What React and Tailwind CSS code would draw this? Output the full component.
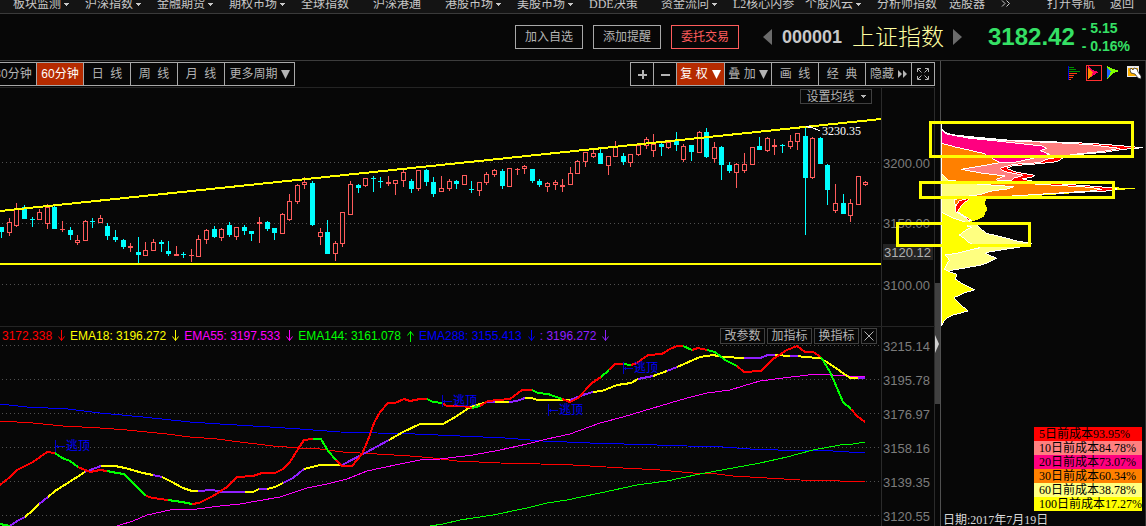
import React from 'react';

const RED = '#ff5c5c';
const CYAN = '#00ffff';

const NAV = [
    { label: '板块监测', menu: true },
    { label: '沪深指数', menu: true },
    { label: '金融期货', menu: true },
    { label: '期权市场', menu: true },
    { label: '全球指数' },
    { label: '沪深港通' },
    { label: '港股市场', menu: true },
    { label: '美股市场', menu: true },
    { label: 'DDE决策' },
    { label: '资金流向', menu: true },
    { label: 'L2核心内参' },
    { label: '个股风云', menu: true },
    { label: '分析师指数' },
    { label: '选股器' },
];

// x, high, body top, body bottom, low, rising
const CANDLES = [
    [1, 227, 227, 232, 238, 0], [9, 218, 222, 233, 236, 1], [16, 203, 208, 226, 227, 1], [24, 205, 207, 219, 219, 0],
    [32, 217, 219, 220, 227, 0], [39, 209, 212, 220, 220, 1], [47, 204, 207, 224, 229, 1], [54, 206, 207, 229, 229, 0],
    [62, 221, 229, 230, 232, 1], [70, 227, 230, 235, 240, 0], [77, 235, 240, 243, 245, 1], [85, 220, 221, 241, 241, 1],
    [92, 218, 221, 222, 228, 0], [100, 215, 218, 223, 223, 1], [107, 223, 226, 236, 240, 0], [115, 230, 237, 240, 242, 0],
    [123, 239, 240, 247, 249, 0], [130, 243, 246, 248, 252, 1], [138, 237, 252, 255, 263, 0], [145, 242, 250, 256, 256, 1],
    [153, 239, 242, 251, 251, 1], [161, 240, 242, 244, 252, 0], [168, 241, 251, 254, 256, 0], [176, 246, 254, 256, 256, 1],
    [183, 252, 254, 255, 258, 0], [191, 249, 255, 256, 262, 1], [198, 235, 239, 257, 257, 1], [206, 229, 230, 240, 244, 1],
    [214, 226, 229, 237, 238, 0], [221, 228, 229, 238, 241, 1], [229, 222, 225, 235, 237, 0], [236, 227, 227, 237, 240, 1],
    [244, 225, 227, 231, 235, 0], [251, 231, 231, 234, 241, 0], [259, 217, 222, 224, 243, 1], [267, 221, 222, 229, 231, 0],
    [274, 228, 228, 233, 240, 0], [282, 213, 214, 234, 234, 1], [289, 194, 201, 220, 221, 1], [297, 184, 185, 202, 204, 1],
    [304, 177, 182, 185, 189, 1], [312, 181, 183, 225, 226, 0], [320, 228, 232, 237, 245, 1], [327, 220, 232, 254, 254, 0],
    [335, 241, 243, 254, 261, 1], [342, 212, 212, 244, 247, 1], [350, 181, 184, 215, 215, 1], [358, 184, 185, 188, 193, 0],
    [365, 178, 178, 186, 187, 1], [373, 176, 178, 179, 192, 0], [380, 177, 181, 182, 188, 0], [388, 176, 182, 184, 186, 1],
    [395, 180, 180, 184, 195, 1], [403, 169, 172, 181, 187, 1], [411, 179, 181, 189, 193, 0], [418, 170, 170, 189, 191, 1],
    [426, 169, 170, 182, 186, 0], [433, 177, 182, 194, 197, 0], [441, 176, 188, 192, 192, 1], [449, 179, 181, 189, 191, 1],
    [456, 180, 181, 184, 189, 0], [464, 175, 175, 185, 185, 1], [471, 181, 189, 190, 193, 0], [479, 182, 182, 191, 196, 1],
    [486, 172, 174, 183, 185, 1], [494, 169, 170, 175, 177, 1], [502, 169, 171, 186, 189, 0], [509, 168, 168, 187, 187, 1],
    [517, 168, 169, 170, 175, 1], [524, 165, 166, 169, 174, 1], [532, 169, 169, 181, 183, 0], [539, 179, 181, 185, 187, 0],
    [547, 182, 183, 187, 192, 1], [555, 180, 182, 185, 190, 1], [562, 179, 185, 187, 192, 1], [570, 167, 173, 185, 185, 1],
    [577, 160, 161, 174, 174, 1], [585, 152, 152, 162, 167, 1], [593, 149, 153, 157, 158, 1], [600, 148, 153, 164, 164, 0],
    [608, 156, 156, 166, 175, 1], [615, 141, 147, 157, 157, 1], [623, 153, 156, 162, 165, 0], [630, 154, 154, 163, 167, 1],
    [638, 145, 145, 155, 156, 1], [646, 137, 139, 146, 149, 1], [653, 134, 144, 151, 157, 1], [661, 142, 144, 147, 156, 0],
    [668, 141, 142, 148, 149, 1], [676, 132, 141, 145, 151, 0], [683, 144, 146, 160, 162, 1], [691, 145, 145, 152, 161, 0],
    [699, 131, 132, 153, 153, 1], [706, 128, 132, 157, 158, 0], [714, 142, 147, 159, 163, 1], [721, 146, 147, 165, 180, 0],
    [729, 162, 165, 171, 173, 0], [736, 163, 164, 173, 188, 1], [744, 153, 164, 171, 173, 1], [752, 147, 147, 165, 165, 1],
    [759, 137, 146, 150, 150, 0], [767, 137, 138, 151, 152, 1], [774, 139, 145, 147, 155, 1], [782, 144, 145, 146, 153, 0],
    [790, 135, 141, 147, 149, 1], [797, 133, 133, 142, 150, 1], [805, 126, 136, 178, 235, 0], [812, 137, 138, 178, 179, 1],
    [820, 137, 138, 164, 164, 0], [827, 164, 165, 190, 205, 0], [835, 184, 203, 211, 213, 1], [843, 194, 203, 214, 214, 0],
    [850, 199, 203, 216, 222, 1], [858, 176, 176, 205, 205, 1], [865, 181, 182, 185, 186, 1],
];

const SLOW_LINES = [
    ['#0000ff', '0,404 27,407 68,409 100,413 143,417 190,422 220,424 270,427 300,429 340,432 377,433 415,434 460,436 505,438 543,441 590,443 657,445 687,446 723,447 750,449 778,450 817,450 865,453'],
    ['#ff0000', '0,421 33,423 63,426 100,428 127,430 167,434 190,437 217,439 240,442 273,446 300,448 320,449 343,452 377,454 410,456 433,458 457,461 500,463 540,464 573,465 623,468 660,470 693,473 717,474 733,476 767,478 800,480 840,481 865,481'],
    ['#ff00ff', '117,526 133,521 147,515 170,510 197,509 220,506 240,504 280,497 307,488 327,484 347,479 367,471 400,464 420,460 440,459 473,455 500,450 527,444 547,439 570,434 600,423 623,417 643,411 687,398 707,393 730,390 743,386 760,381 783,378 817,374 833,375 865,377'],
    ['#00ff00', '430,526 443,524 460,520 493,515 527,508 547,503 567,500 600,493 637,485 667,481 700,474 733,468 760,463 787,457 813,450 840,445 853,444 865,442'],
];

// segments of the two averages that switch colour with direction
const TREND_SEGMENTS = {
    '#ffff00': [
        '25,517 33,510 39,504', '48,497 55,491 85,472', '101,466 115,466 125,468 143,473 153,475',
        '162,477 170,481 183,488 192,491 198,491', '245,492 253,492 259,489', '267,489 275,487 283,483',
        '304,469 320,465 342,465', '389,440 403,432 420,424 443,424 457,416 470,407 487,402', '495,402 509,402',
        '525,398 532,398 537,400 570,400', '593,392 602,391 617,385 631,383 638,379', '653,376 667,371',
        '677,367 700,357 713,355 723,357 744,358', '775,355 790,356', '798,356 804,357 820,358 830,364 850,378 858,378',
    ],
    '#9020ff': [
        '10,526 17,521 25,517', '39,504 48,497', '85,472 93,469 101,466', '153,475 162,477',
        '198,491 213,490 222,492 245,492', '259,489 267,489', '283,483 293,478 304,469', '342,465 367,452 389,440',
        '487,402 495,402', '509,402 517,401 525,398', '570,400 583,395 593,392', '638,379 653,376', '667,371 677,367',
        '744,358 760,358 768,355 775,355', '790,356 798,356', '858,378 865,378',
    ],
    '#ff0000': [
        '0,485 10,477 17,470 33,462 47,452 55,453', '78,467 90,472 100,470 107,471', '146,496 153,498 168,500',
        '192,504 199,503 213,496 227,487 237,477 253,476 262,473 275,473 283,469 290,462 300,446 304,440 313,439',
        '336,460 342,466 352,466 362,454 368,440 374,423 380,412 388,403 395,403 404,399 410,401 420,399 427,399',
        '442,403 447,406 463,406 472,408', '480,406 488,401 510,399 522,390 532,390', '562,399 570,402 578,398 592,383 601,377',
        '609,370 615,364 623,364', '631,365 637,363 648,355 662,354 670,349 677,346 683,346', '692,350 698,348 707,350',
        '737,366 744,372 761,371 773,359 787,350 797,346 805,352 813,352 821,357', '851,409 857,416 865,422',
    ],
    '#00ff00': [
        '0,524 10,526', '55,453 62,458 70,461 78,467', '107,471 117,473 124,474 133,483 146,496', '168,500 182,502 192,504',
        '313,439 321,439 328,451 336,460', '427,399 433,402 442,403', '472,408 480,406', '532,390 538,393 548,394 562,399',
        '601,377 609,370', '623,364 631,365', '683,346 692,350', '707,350 715,352 725,360 737,366',
        '821,357 830,372 837,388 843,402 851,409',
    ],
};

const SIGNALS = [[55, 446], [442, 401], [548, 410], [623, 368]];

// fill, outline, points
const CHIP_LAYERS = [
    ['#ffff00', 'none', '155,265 680,262 741,266 655,272 450,287 350,293 290,297 284,310 292,328 285,340 282,350 262,360 240,366 155,366'],
    ['#ff0000', '#fff', '155,86 165,97 185,104 250,111 350,120 500,126 600,130 680,136 758,143 700,148 640,157 560,164 520,174 500,185 450,191 370,197 350,205 380,217 435,226 425,232 395,236 425,243 500,251 600,258 660,263 680,267 650,273 500,280 350,288 240,295 215,315 203,335 245,362 155,362'],
    ['#ff8080', '#fff', '155,86 165,97 185,104 250,114 350,122 500,128 600,134 690,145 640,154 550,163 470,178 450,188 370,193 330,205 345,215 400,226 370,235 365,243 155,243'],
    ['#ff0080', '#fff', '155,90 170,102 240,115 330,124 455,138 470,145 450,152 480,163 380,186 330,188 155,188'],
    ['#ff8000', '#fff', '155,130 200,142 280,160 330,188 250,202 213,208 280,220 345,228 320,238 325,245 450,253 600,262 635,268 600,273 430,284 350,289 240,294 208,302 196,320 195,335 155,335'],
    ['#ffff80', '#fff', '155,222 175,240 260,252 372,260 350,267 300,274 270,284 220,290 193,300 197,325 197,335 225,352 240,366 262,376 270,385 290,400 340,412 385,424 425,430 390,441 290,457 285,460 320,475 290,490 270,496 190,510 175,514 155,500'],
    ['#ffff00', '#fff', '155,337 185,352 215,363 235,370 232,378 245,382 225,392 208,405 222,415 240,430 270,443 200,460 165,465 178,480 172,490 163,508 178,515 202,524 195,537 215,550 254,569 220,580 192,593 210,612 234,633 190,645 170,655 160,665 155,678'],
];

const Caret = () => (
    <svg width="5" height="3" viewBox="0 0 5 3" fill="currentColor" shapeRendering="crispEdges"><path d="M0 0h5v1H4v1H3v1H2V2H1V1H0z" /></svg>
);

const Triangle = () => (
    <svg width="9" height="9" viewBox="0 0 9 9" fill="currentColor"><path d="M0 0h9L4.5 9z" /></svg>
);

const TrendArrow = ({ up }) => (
    <svg width="8" height="12" viewBox="0 0 8 12" fill="none" stroke="currentColor">
        {up ? <path d="M4.5 12V1.500M1.500 5.500l3-4 3 4" /> : <path d="M4.500 0v10.500M1.500 6.500l3 4 3-4" />}
    </svg>
);

const ToolButton = ({ className = '', active, children, ...rest }) => (
    <button
        className={`-ml-px flex h-6 shrink-0 items-center justify-center whitespace-pre border border-[#a8a8a8] ${active ? 'bg-[#b52b00] text-white' : 'text-[#b4b4b4]'} ${className}`}
        {...rest}
    >
        {children}
    </button>
);

const HeaderButton = ({ alert, children }) => (
    <button className={`h-6 w-[68px] border text-xs ${alert ? 'border-[#ff5c5c] text-[#ff5c5c]' : 'border-[#a8a8a8] text-[#b4b4b4]'}`}>
        {children}
    </button>
);

const Navigation = () => (
    <nav className="flex h-[14px] items-end overflow-hidden border-b border-[#3a3a3a] bg-[#141414] pr-3 pl-[13px] font-['Liberation_Serif','Noto_Sans_CJK_SC',serif] leading-[18px] text-[#c8c8c8]">
        {NAV.map((item) => (
            <a key={item.label} href="#" className="flex w-[72px] shrink-0 items-center gap-[3px] whitespace-nowrap">
                {item.label}
                {item.menu && <Caret />}
            </a>
        ))}
        <button className="-ml-5 mb-[6px] shrink-0" aria-label="更多">
            <svg width="10" height="7" viewBox="0 0 10 7" fill="none" stroke="currentColor"><path d="M1 .5l3 3-3 3M5.500 .5l3 3-3 3" /></svg>
        </button>
        <a href="#" className="ml-auto shrink-0">打开导航</a>
        <a href="#" className="ml-[15px] shrink-0">返回</a>
    </nav>
);

const Header = () => (
    <header className="flex h-[47px] items-center justify-end border-b border-[#3c3c3c] pr-4">
        <div className="flex gap-[10px]">
            <HeaderButton>加入自选</HeaderButton>
            <HeaderButton>添加提醒</HeaderButton>
            <HeaderButton alert>委托交易</HeaderButton>
        </div>
        <button aria-label="上一个" className="ml-6">
            <svg width="9" height="16" viewBox="0 0 9 16" fill="#6b6b6b"><path d="M9 0v16L0 8z" /></svg>
        </button>
        <span className="ml-[10px] text-lg font-bold text-[#c8c8c8]">000001</span>
        <h1 className="ml-[10px] text-[23px] leading-6 font-light text-[#ffffa0]">上证指数</h1>
        <button aria-label="下一个" className="ml-[9px]">
            <svg width="9" height="16" viewBox="0 0 9 16" fill="#6b6b6b"><path d="M0 0v16l9-8z" /></svg>
        </button>
        <span className="ml-[26px] text-2xl font-bold text-[#35e065]">3182.42</span>
        <div className="ml-[7px] text-sm leading-[18px] font-bold text-[#35e065]">
            <div>- 5.15</div>
            <div>- 0.16%</div>
        </div>
    </header>
);

const Toolbar = () => (
    <div className="flex h-[27px] justify-between overflow-hidden border-b border-[#242424] pt-px">
        <div className="-ml-[10px] flex">
            <ToolButton className="w-12">30分钟</ToolButton>
            <ToolButton className="w-12" active>60分钟</ToolButton>
            <ToolButton className="w-12">{'日  线'}</ToolButton>
            <ToolButton className="w-12">{'周  线'}</ToolButton>
            <ToolButton className="w-12">{'月  线'}</ToolButton>
            <ToolButton className="w-[71px] gap-[3px]">更多周期<Triangle /></ToolButton>
        </div>
        <div className="flex">
            <ToolButton className="w-6" aria-label="放大">
                <svg width="9" height="9" viewBox="0 0 9 9" fill="currentColor"><path d="M4 0h2v4h3v2H6v3H4V6H0V4h4z" /></svg>
            </ToolButton>
            <ToolButton className="w-6" aria-label="缩小">
                <svg width="9" height="9" viewBox="0 0 9 9" fill="currentColor"><path d="M0 4h9v2H0z" /></svg>
            </ToolButton>
            <ToolButton className="w-[49px] gap-1" active>复 权<Triangle /></ToolButton>
            <ToolButton className="w-12 gap-[3px]">叠 加<Triangle /></ToolButton>
            <ToolButton className="w-12">{'画  线'}</ToolButton>
            <ToolButton className="w-12">{'经  典'}</ToolButton>
            <ToolButton className="w-[47px] gap-1">
                隐藏
                <svg width="9" height="8" viewBox="0 0 9 8" fill="currentColor"><path d="M0 0l4 4-4 4zM5 0l4 4-4 4z" /></svg>
            </ToolButton>
            <ToolButton className="w-6" aria-label="全屏">
                <svg width="12" height="12" viewBox="0 0 12 12" fill="none" stroke="currentColor">
                    <path d="M.5 4V.5H4M8 .5h3.500V4M11.500 8v3.500H8M4 11.500H.5V8M1 1l3.500 3.500M11 1L7.500 4.500M11 11L7.500 7.500M1 11l3.500-3.500" />
                </svg>
            </ToolButton>
        </div>
    </div>
);

const Grid = ({ rows }) => rows.map((y) => (
    <path key={y} d={`M2 ${y}.5H881`} stroke="#505050" strokeDasharray="1 3" />
));

const Candle = ({ x, high, top, bottom, low, up }) => {
    const color = up ? RED : CYAN;
    return (
        <g fill={color}>
            <rect x={x} y={high} width="1" height={top - high} />
            <rect x={x} y={bottom} width="1" height={low - bottom} />
            {up && bottom - top > 2
                ? <rect x={x - 1.5} y={top + 0.5} width="4" height={bottom - top - 1} fill="#070707" stroke={color} />
                : <rect x={x - 2} y={top} width="5" height={bottom - top} />}
        </g>
    );
};

const PriceChart = () => (
    <section className="flex border-b border-[#242424]">
        <div className="relative min-w-0 flex-1">
            <svg className="h-[238px] w-full" viewBox="0 88 881 238" preserveAspectRatio="xMaxYMin meet" shapeRendering="crispEdges">
                <Grid rows={[162, 223, 284]} />
                {CANDLES.map(([x, high, top, bottom, low, up]) => (
                    <Candle key={x} x={x} high={high} top={top} bottom={bottom} low={low} up={up} />
                ))}
                <path d="M0 211L881 119M0 264H881" stroke="#ffff00" strokeWidth="2" />
                <path d="M806 126h5l-1 2zM811 127l9 4" fill="#fff" stroke="#fff" />
                <text x="822" y="135" fill="#fff" fontSize="12" className="font-['Liberation_Serif',serif]">3230.35</text>
            </svg>
            <button className="absolute top-px right-[9px] flex h-[15px] w-[72px] items-center justify-center gap-[6px] border border-[#404040] text-[#b4b4b4]">
                设置均线<Caret />
            </button>
        </div>
        <svg className="w-[54px] shrink-0 border-x border-[#2a2a2a]" height="238" viewBox="882 88 52 238" fill="#7c7c7c" fontSize="13">
            <text x="883" y="168">3200.00</text>
            <text x="883" y="228">3150.00</text>
            <text x="883" y="290">3100.00</text>
            <rect x="883" y="244" width="50" height="16" fill="#242424" />
            <text x="884" y="257" fill="#b0b0b0">3120.12</text>
        </svg>
    </section>
);

const IndicatorChart = () => (
    <section className="flex">
        <div className="relative min-w-0 flex-1">
            <svg className="h-[199px] w-full" viewBox="0 327 881 199" preserveAspectRatio="xMaxYMin meet" shapeRendering="crispEdges">
                <Grid rows={[345, 379, 413, 447, 481, 515]} />
                {SLOW_LINES.map(([color, points]) => (
                    <polyline key={color} points={points} fill="none" stroke={color} />
                ))}
                {Object.entries(TREND_SEGMENTS).map(([color, lines]) => (
                    <g key={color} fill="none" stroke={color} strokeWidth="2">
                        {lines.map((points) => <polyline key={points} points={points} />)}
                    </g>
                ))}
                {SIGNALS.map(([x, y]) => (
                    <g key={x} fill="#0000ff">
                        <path d={`M${x}.5 ${y - 6}v12M${x} ${y}.5h10M${x + 2}.5 ${y - 1}v3`} stroke="#0000d0" />
                        <text x={x + 11} y={y + 4} fontSize="12">逃顶</text>
                    </g>
                ))}
            </svg>
            <div className="absolute inset-x-0 top-0 flex h-[18px] items-center justify-between pr-1 pl-[2px]">
                <div className="flex items-center gap-[5px] whitespace-nowrap">
                    <span className="text-[#ff0000]">3172.338</span>
                    <span className="text-[#ff0000]"><TrendArrow /></span>
                    <span className="text-[#ffff00]">EMA18: 3196.272</span>
                    <span className="text-[#ffff00]"><TrendArrow /></span>
                    <span className="text-[#ff00ff]">EMA55: 3197.533</span>
                    <span className="text-[#ff00ff]"><TrendArrow /></span>
                    <span className="text-[#00ff00]">EMA144: 3161.078</span>
                    <span className="text-[#00ff00]"><TrendArrow up /></span>
                    <span className="text-[#0000ff]">EMA288: 3155.413</span>
                    <span className="text-[#0000ff]"><TrendArrow /></span>
                    <span className="text-[#9020ff]">: 3196.272</span>
                    <span className="text-[#9020ff]"><TrendArrow /></span>
                </div>
                <div className="flex gap-[2px] text-[#b4b4b4]">
                    <button className="h-4 w-[45px] border border-[#404040] leading-[14px]">改参数</button>
                    <button className="h-4 w-[45px] border border-[#404040] leading-[14px]">加指标</button>
                    <button className="h-4 w-[45px] border border-[#404040] leading-[14px]">换指标</button>
                    <button className="flex h-4 w-4 items-center justify-center border border-[#404040]" aria-label="关闭">
                        <svg width="10" height="10" viewBox="0 0 10 10" stroke="currentColor"><path d="M.5 .5l9 9M9.500 .5l-9 9" /></svg>
                    </button>
                </div>
            </div>
        </div>
        <svg className="w-[54px] shrink-0 border-x border-[#2a2a2a]" height="199" viewBox="882 327 52 199" fill="#7c7c7c" fontSize="13">
            <text x="883" y="351">3215.14</text>
            <text x="883" y="385">3195.78</text>
            <text x="883" y="419">3176.97</text>
            <text x="883" y="453">3158.16</text>
            <text x="883" y="487">3139.35</text>
            <text x="883" y="521">3120.55</text>
        </svg>
    </section>
);

const ChipIcons = () => (
    <div className="flex h-[27px] shrink-0 items-start justify-end gap-1 pt-1 pr-[3px]">
        <button aria-label="筹码分布">
            <svg width="16" height="16" viewBox="0 0 16 16" shapeRendering="crispEdges">
                <path d="M2 1h1v14H2z" fill="#0000e0" />
                <path d="M3 2h5v1H3zM3 4h7v1H3zM3 6h11v1H3z" fill="#009000" />
                <path d="M3 8h8v1H3zM3 10h5v1H3zM3 12h4v1H3zM3 14h2v1H3z" fill="#ff4010" />
            </svg>
        </button>
        <button aria-label="远期移动" className="border border-[#ff3030]">
            <svg width="14" height="14" viewBox="0 0 14 14" shapeRendering="crispEdges">
                <path d="M1 0l4 4 7 2-5 3-6 4z" fill="#ff0060" />
                <path d="M1 2l5 4-1 3-4 4z" fill="#ff9000" />
            </svg>
        </button>
        <button aria-label="近期移动">
            <svg width="14" height="15" viewBox="0 0 14 15" shapeRendering="crispEdges">
                <path d="M1 1l4 2 8 3-5 2-7 6z" fill="#80ff00" />
                <path d="M1 3l4 3-2 5-2 3z" fill="#2060ff" />
            </svg>
        </button>
        <button aria-label="设置" className="ml-[2px]">
            <svg width="16" height="16" viewBox="0 0 16 16">
                <path d="M1 1h12v11H1z" fill="#e8e8e8" />
                <path d="M2 3h10v8H2z" fill="#ffb000" />
                <path d="M5 3l2 2 1-2 3 1 1 3 3 4v3l-3-1-3-4-4-1-1-3z" fill="#fff" stroke="#202020" strokeWidth=".7" />
            </svg>
        </button>
    </div>
);

const ChipPanel = () => (
    <aside className="relative flex w-[206px] shrink-0 flex-col border-x border-l-[#505050] border-r-[#303030]">
        <ChipIcons />
        <svg className="w-full overflow-visible" height="339" viewBox="941 88 204 339" preserveAspectRatio="xMinYMin meet" shapeRendering="crispEdges">
            <g transform="translate(890 100) scale(.33333)" strokeWidth="3">
                {CHIP_LAYERS.map(([fill, outline, points]) => (
                    <polygon key={points} points={points} fill={fill} stroke={outline} />
                ))}
                <path d="M154 72V678" stroke="#fff" />
            </g>
            <g fill="none" stroke="#ffff00" strokeWidth="3">
                <rect x="930.5" y="122.5" width="202" height="34" />
                <rect x="920.5" y="182.5" width="193" height="15" />
                <rect x="897.5" y="223.5" width="132" height="22" />
            </g>
        </svg>
        <ul className="mr-[3px] w-[108px] self-end font-['Liberation_Serif','Noto_Sans_CJK_SC',serif] leading-[14px] whitespace-nowrap text-black">
            <li className="bg-[#ff0000] pl-[5px]">5日前成本93.95%</li>
            <li className="bg-[#ff8080] pl-[5px]">10日前成本84.78%</li>
            <li className="bg-[#ff0080] pl-[5px]">20日前成本73.07%</li>
            <li className="bg-[#ff8000] pl-[5px]">30日前成本60.34%</li>
            <li className="bg-[#ffff80] pl-[5px]">60日前成本38.78%</li>
            <li className="bg-[#ffff00] pl-[5px]">100日前成本17.27%</li>
        </ul>
        <p className="pt-[3px] pl-[2px] font-['Liberation_Serif','Noto_Sans_CJK_SC',serif] leading-3 text-[#d8d8d8]">日期:2017年7月19日</p>
    </aside>
);

const App = () => (
    <div className="min-h-screen overflow-hidden bg-[#070707] font-['Liberation_Sans','Noto_Sans_CJK_SC',sans-serif] text-xs">
        <Navigation />
        <Header />
        <main className="flex">
            <div className="min-w-0 flex-1">
                <Toolbar />
                <PriceChart />
                <IndicatorChart />
            </div>
            <div className="w-[5px] shrink-0 pt-[222px]">
                <div className="flex h-[121px] items-center bg-[#404040]">
                    <svg width="4" height="18" viewBox="0 0 4 18" fill="#d0d0d0"><path d="M0 0l4 9-4 9z" /></svg>
                </div>
            </div>
            <ChipPanel />
        </main>
    </div>
);

export default App;
